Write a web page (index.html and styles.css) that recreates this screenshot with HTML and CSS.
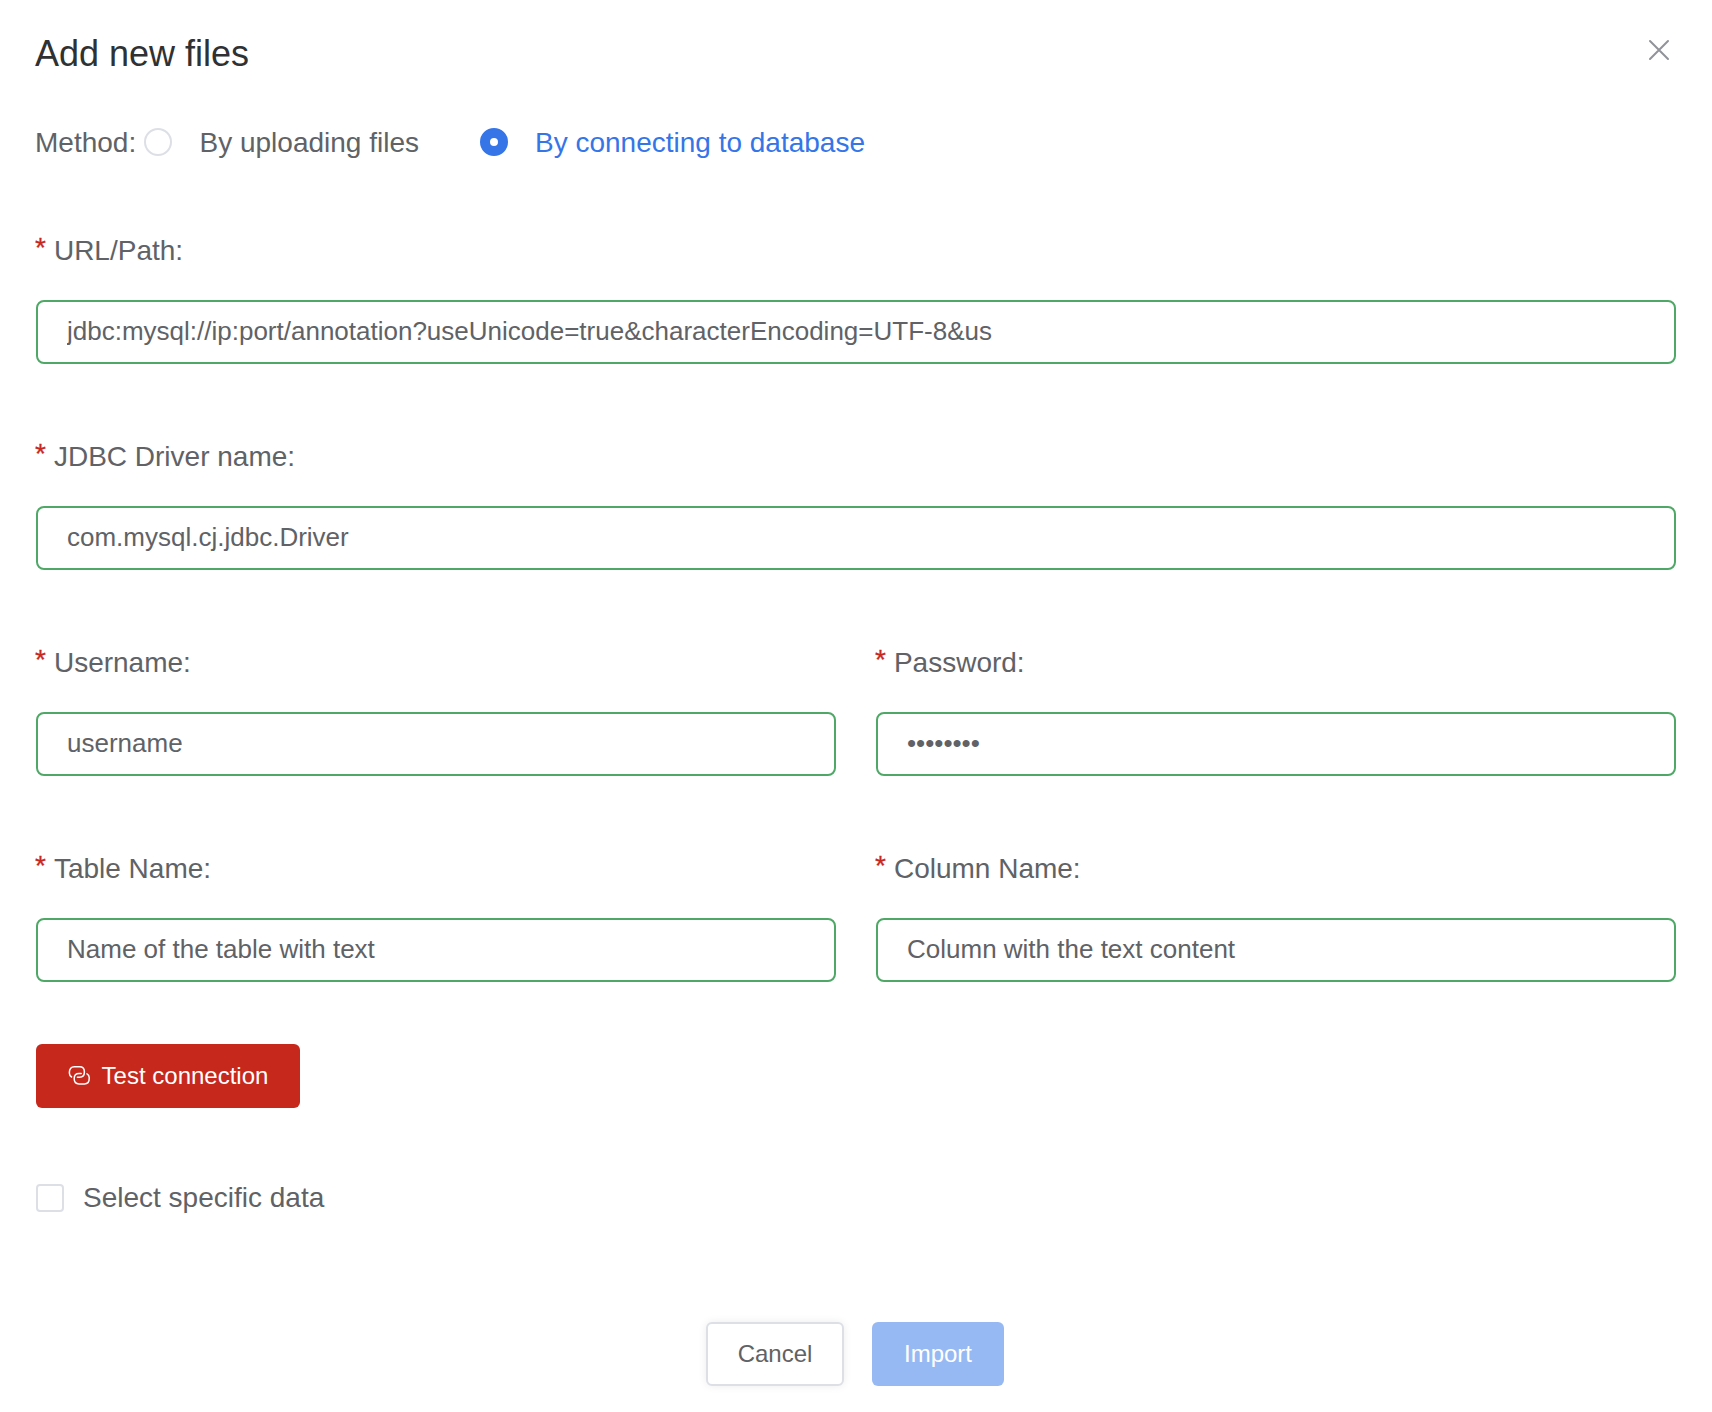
FILE: index.html
```html
<!DOCTYPE html>
<html lang="en">
<head>
<meta charset="utf-8">
<title>Add new files</title>
<link rel="stylesheet" href="styles.css">
</head>
<body>
<main class="dialog">
  <header class="header">
    <h1 class="title">Add new files</h1>
    <button class="close" type="button" aria-label="Close">
      <svg width="22" height="22" viewBox="0 0 22 22"><path d="M2 2L20 20M20 2L2 20"/></svg>
    </button>
  </header>
  <form class="form">
    <div class="method">
      <span class="caption">Method:</span>
      <label class="option"><span class="radio"></span><span class="text">By uploading files</span></label>
      <label class="option selected"><span class="radio"></span><span class="text">By connecting to database</span></label>
    </div>
    <div class="fields">
      <label class="field wide"><span class="label">URL/Path:</span><input class="input" type="text" value="jdbc:mysql://ip:port/annotation?useUnicode=true&amp;characterEncoding=UTF-8&amp;us"></label>
      <label class="field wide"><span class="label">JDBC Driver name:</span><input class="input" type="text" value="com.mysql.cj.jdbc.Driver"></label>
      <label class="field"><span class="label">Username:</span><input class="input" type="text" value="username"></label>
      <label class="field"><span class="label">Password:</span><input class="input" type="password" value="password"></label>
      <label class="field"><span class="label">Table Name:</span><input class="input" type="text" value="Name of the table with text"></label>
      <label class="field"><span class="label">Column Name:</span><input class="input" type="text" value="Column with the text content"></label>
    </div>
    <button class="button danger" type="button">
      <svg class="link" width="24" height="24" viewBox="0 0 24 24"><path d="M4.6 13C3.2 12.2 2.4 10.9 2.4 9.2V8C2.4 4.8 4.2 2.8 7.2 2.8H12.6C15.6 2.8 17.4 4.8 17.4 8C17.4 11.2 15.6 13.2 12.6 13.2H10.4"/><path d="M20 9.8C21.4 10.6 22.2 11.9 22.2 13.6V14.8C22.2 18 20.4 19.9 17.4 19.9H12C9 19.9 7.2 18 7.2 14.8C7.2 11.6 9 9.6 12 9.6H14.2"/></svg>
      <span>Test connection</span>
    </button>
    <label class="check"><span class="box"></span>Select specific data</label>
    <footer class="actions">
      <button class="button cancel" type="button">Cancel</button>
      <button class="button import" type="button">Import</button>
    </footer>
  </form>
</main>
</body>
</html>
```
FILE: styles.css
```css
* { box-sizing: border-box; }
body {
  margin: 0;
  background: #fff;
  color: #606266;
  font: 28px/40px "Liberation Sans", Arial, sans-serif;
}
button, input { font-family: inherit; color: inherit; }
.dialog { height: 1412px; padding: 33px 36px 0; }
.header { display: flex; justify-content: space-between; height: 89px; }
.title { margin: 0; margin-left: -1px; color: #303133; font-size: 36px; font-weight: 400; line-height: 42px; }
.close { display: flex; width: 22px; height: 22px; margin: 6px 6px 0 0; padding: 0; border: 0; background: none; }
.close path { fill: none; stroke: #909399; stroke-width: 2; stroke-linecap: round; }
.form { display: flex; flex-direction: column; align-items: flex-start; }
.method { display: flex; height: 40px; margin-left: -1px; }
.caption { width: 109px; padding-top: 1px; }
.option { display: flex; align-items: center; height: 40px; }
.option + .option { margin-left: 61.5px; }
.radio { width: 28px; height: 28px; margin-right: 27.5px; border: 2px solid #dcdfe6; border-radius: 50%; }
.text { padding-top: 2px; }
.selected { color: #3575e8; }
.selected .radio { margin-right: 26.5px; border: 10px solid #3575e8; }
.fields { display: grid; grid-template-columns: 1fr 1fr; gap: 72px 40px; width: 1640px; margin-top: 68px; }
.field { display: flex; flex-direction: column; gap: 30px; }
.wide { grid-column: span 2; }
.label { height: 40px; padding-top: 1px; }
.label::before { content: "*"; position: relative; top: -3px; margin: 0 8px 0 -1px; color: #c7281c; -webkit-text-stroke: .3px #c7281c; }
.input { width: 100%; height: 64px; padding: 0 29px 2px; border: 2px solid #4fa866; border-radius: 8px; background: #fff; font-size: 26px; outline: 0; }
.button { display: flex; align-items: center; justify-content: center; height: 64px; padding: 0; border: 0; border-radius: 6px; font-size: 24px; line-height: 28px; }
.danger { gap: 10.5px; width: 264px; margin-top: 62px; padding-right: .5px; background: #c7281c; color: #fff; }
.link path { fill: none; stroke: #fff; stroke-width: 1.5; stroke-linecap: round; }
.check { display: flex; align-items: center; gap: 19px; margin-top: 70px; }
.box { width: 28px; height: 28px; border: 2px solid #dcdfe6; border-radius: 4px; }
.actions { display: flex; align-self: center; gap: 28px; margin: 104px 2px 0 0; }
.cancel { width: 138px; border: 2px solid #dcdfe6; background: #fff; box-shadow: 0 0 8px rgba(0, 0, 0, .08); }
.import { width: 132px; background: #97b9f3; color: #fff; }
```
